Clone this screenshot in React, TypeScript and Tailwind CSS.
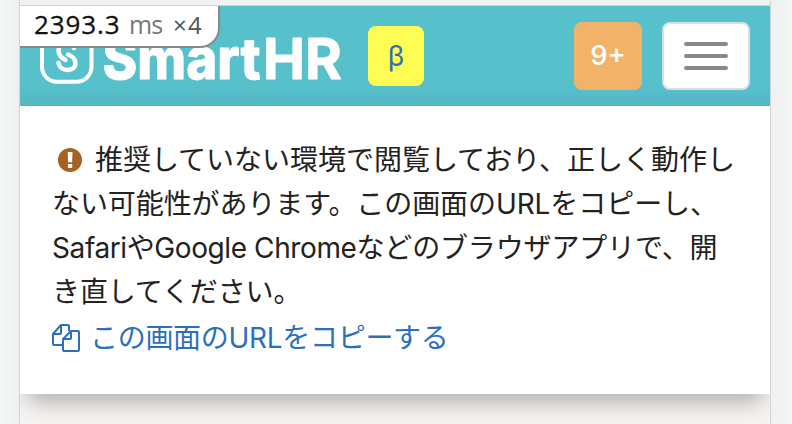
const jp = "font-['Inter','Noto_Sans_CJK_JP',sans-serif]";

function Logo() {
  return (
    <svg className="block h-[60px] w-[304px] shrink-0 overflow-visible" viewBox="0 0 304 60" aria-label="SmartHR">
      <rect x="2" y="3" width="49.500" height="53.700" rx="15" fill="none" stroke="white" strokeWidth="4" />
      <path
        d="M34 23C32 16 19 16 18.500 25C18.500 31 22 33 25.500 35M28 29.500C32 31 35.500 34 35.500 38.500C35 47 20 47.500 18.500 38"
        fill="none"
        stroke="white"
        strokeWidth="4.5"
        strokeLinecap="round"
      />
      <text
        y="53.5"
        stroke="white"
        strokeWidth="0.8"
        strokeLinejoin="round"
        className="fill-white font-['Inter',sans-serif] text-[57px] font-extrabold"
      >
        <tspan x="62.5" textLength="158" lengthAdjust="spacingAndGlyphs">
          Smart
        </tspan>
        <tspan x="223" textLength="79" lengthAdjust="spacingAndGlyphs" className="font-bold">
          HR
        </tspan>
      </text>
    </svg>
  );
}

function AlertIcon() {
  return (
    <svg className="ml-[6px] mr-[13px] inline-block size-6 align-[-2px]" viewBox="0 0 24 24">
      <circle cx="12" cy="12" r="12" fill="#a9611f" />
      <path d="M9.7 4h4.800l-.4 10.200H10.100zM10 16h4.200v4H10z" fill="white" />
    </svg>
  );
}

function CopyIcon() {
  return (
    <svg
      className="size-7 shrink-0"
      viewBox="0 0 28 28"
      fill="none"
      stroke="#2b70bd"
      strokeWidth="2"
      strokeLinejoin="round"
    >
      <path d="M11 21H2a1 1 0 0 1-1-1V10L9 1H16a1 1 0 0 1 1 1V7M9 1V9a1 1 0 0 1-1 1H1" />
      <path d="M11 15L19 7H26a1 1 0 0 1 1 1V26a1 1 0 0 1-1 1H12a1 1 0 0 1-1-1ZM19 7V14a1 1 0 0 1-1 1H11" />
    </svg>
  );
}

export default function App() {
  return (
    <div className="flex h-[424px] w-[792px] overflow-hidden bg-[#f2f4f3]">
      <div className="w-[19px] shrink-0 bg-linear-to-r from-[#f5f7f6] to-[#eef0ef]" />
      <div className="flex w-[752px] shrink-0 flex-col border-x border-[#d2d3d4] bg-[#f6f4f2]">
        <div className="h-[6px] shrink-0 border-b border-[#d2d3d4] bg-[#f0f2f1]" />
        <header className="relative flex h-[100px] shrink-0 items-center bg-linear-to-b from-[#56c0cb] from-80% to-[#53b8c3] pl-5 pr-5">
          <div className="mb-[2px]">
            <Logo />
          </div>
          <div className="ml-6 flex h-[60px] w-14 items-center justify-center rounded-lg bg-[#fffd54] font-['Inter',sans-serif] text-[28px] text-[#2b70bd]">
            β
          </div>
          <div className="ml-auto flex h-[68px] w-[68px] items-center justify-center rounded-lg bg-[#f2b267] font-['Inter',sans-serif] text-[27.5px] font-medium text-white">
            9+
          </div>
          <div className="ml-5 flex h-[68px] w-[88px] flex-col items-center justify-center gap-2 rounded-lg border-2 border-[#dddddd] bg-white">
            <span className="h-1 w-11 rounded-full bg-[#888]" />
            <span className="h-1 w-11 rounded-full bg-[#888]" />
            <span className="h-1 w-11 rounded-full bg-[#888]" />
          </div>
          <div className="absolute left-0 top-0 flex h-[42px] w-[200px] items-baseline rounded-br-[20px] border-b-2 border-r-2 border-[#888] bg-white pl-[14px] font-['Open_Sans',sans-serif] leading-[37px]">
            <span className="w-[95px] text-[26px] tracking-[0.9px] text-[#111] [-webkit-text-stroke:0.3px_#111]">
              2393.3
            </span>
            <span className="w-[44px] text-[25px] tracking-[-0.9px] text-[#777]">ms</span>
            <span className="text-[24px] tracking-[1.3px] text-[#555]">×4</span>
          </div>
        </header>
        <main
          className={`h-[288px] shrink-0 bg-white pl-8 pt-8 shadow-[0_16px_20px_-8px_rgba(0,0,0,0.28)] [clip-path:inset(0_0_-40px_0)] ${jp} text-[28px] text-[#23221e]`}
        >
          <p className="whitespace-nowrap leading-[44px]">
            <span className="block h-11 tracking-[-0.02px]">
              <AlertIcon />
              推奨していない環境で閲覧しており、正しく動作し
            </span>
            <span className="block h-11 tracking-[-0.08px]">ない可能性があります。この画面のURLをコピーし、</span>
            <span className="block h-11">
              <span className="tracking-[-0.4px]">SafariやGoogle Chrome</span>
              <span className="tracking-[-0.15px]">などのブラウザアプリで、開</span>
            </span>
            <span className="block h-11 tracking-[-0.1px]">き直してください。</span>
          </p>
          <a className="flex h-12 items-center gap-[10px] whitespace-nowrap leading-[48px] tracking-[-0.3px] text-[#2b70bd]">
            <CopyIcon />
            この画面のURLをコピーする
          </a>
        </main>
      </div>
      <div className="grow bg-linear-to-r from-[#eff1f1] to-[#f5f7f6]" />
    </div>
  );
}
